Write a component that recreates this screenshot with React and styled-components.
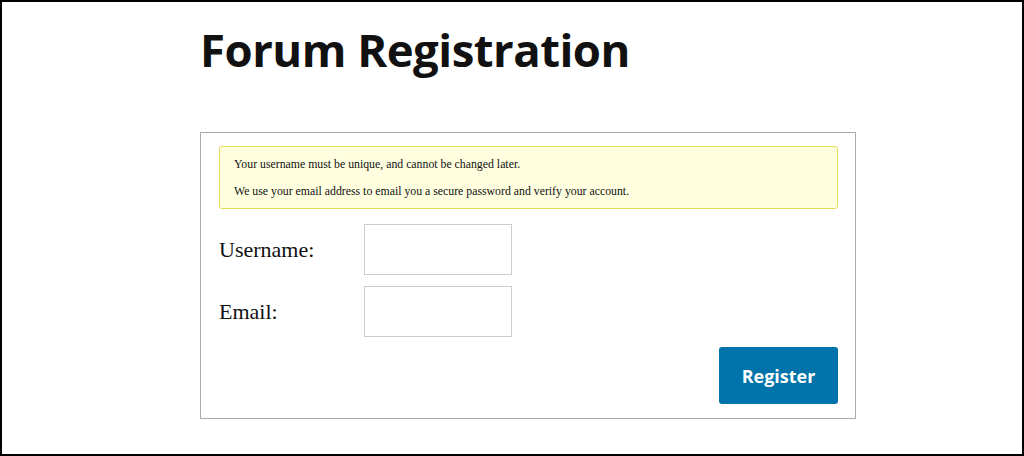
import React from 'react'
import styled, { createGlobalStyle } from 'styled-components';

const GlobalStyle = createGlobalStyle`
  html, body {
    margin: 0;
    padding: 0;
    background: #fff;
  }
  #root {
    width: 1024px;
    height: 456px;
  }
`;

function Field(props){
  return (
    <Row>
      <Label htmlFor={props.id}>{props.label}</Label>
      <Input id={props.id} type={props.type} />
    </Row>
  )
}

function App() {
  return (
    <Frame>
      <GlobalStyle />
      <Column>
        <Title>Forum Registration</Title>
        <FormBox>
          <Notice>
            <p>Your username must be unique, and cannot be changed later.</p>
            <p>We use your email address to email you a secure password and verify your account.</p>
          </Notice>
          <Field id="username" label="Username:" type="text" />
          <Field id="email" label="Email:" type="email" />
          <Actions>
            <Button type="button">Register</Button>
          </Actions>
        </FormBox>
      </Column>
    </Frame>
  )
}
export default App


const Frame = styled.div`
  box-sizing: border-box;
  width: 1024px;
  height: 456px;
  border: 2px solid #000;
  background: #fff;
`;

const Column = styled.div`
  width: 656px;
  margin-left: 198px;
`;

const Title = styled.h1`
  margin: 15px 0 0 0;
  font-family: "Open Sans", sans-serif;
  font-weight: 700;
  font-size: 45.5px;
  line-height: 64px;
  color: #111;
  letter-spacing: -0.5px;
`;

const FormBox = styled.div`
  margin-top: 51px;
  box-sizing: border-box;
  height: 287px;
  border: 1px solid #aaa;
  padding: 13px 17px 0 18px;
`;

const Notice = styled.div`
  box-sizing: border-box;
  height: 63px;
  background: #ffffe0;
  border: 1px solid #e6db55;
  border-radius: 3px;
  padding: 10px 14px;
  font-family: "Liberation Serif", serif;
  font-size: 11.8px;
  color: #111;

  p {
    margin: 0;
    line-height: 14px;
  }
  p + p {
    margin-top: 13px;
  }
`;

const Row = styled.div`
  display: flex;
  align-items: center;
  margin-top: 15px;
  & + & {
    margin-top: 11px;
  }
`;

const Label = styled.label`
  width: 145px;
  font-family: "Liberation Serif", serif;
  font-size: 22px;
  color: #111;
`;

const Input = styled.input`
  box-sizing: border-box;
  width: 148px;
  height: 51px;
  border: 1px solid #ccc;
  background: #fff;
  margin: 0;
`;

const Actions = styled.div`
  display: flex;
  justify-content: flex-end;
  margin-top: 10px;
`;

const Button = styled.button`
  width: 119px;
  height: 57px;
  background-color: #0073aa;
  color: #fff;
  border: none;
  border-radius: 3px;
  font-family: "Open Sans", sans-serif;
  font-weight: 700;
  font-size: 18px;
  cursor: pointer;
`;
